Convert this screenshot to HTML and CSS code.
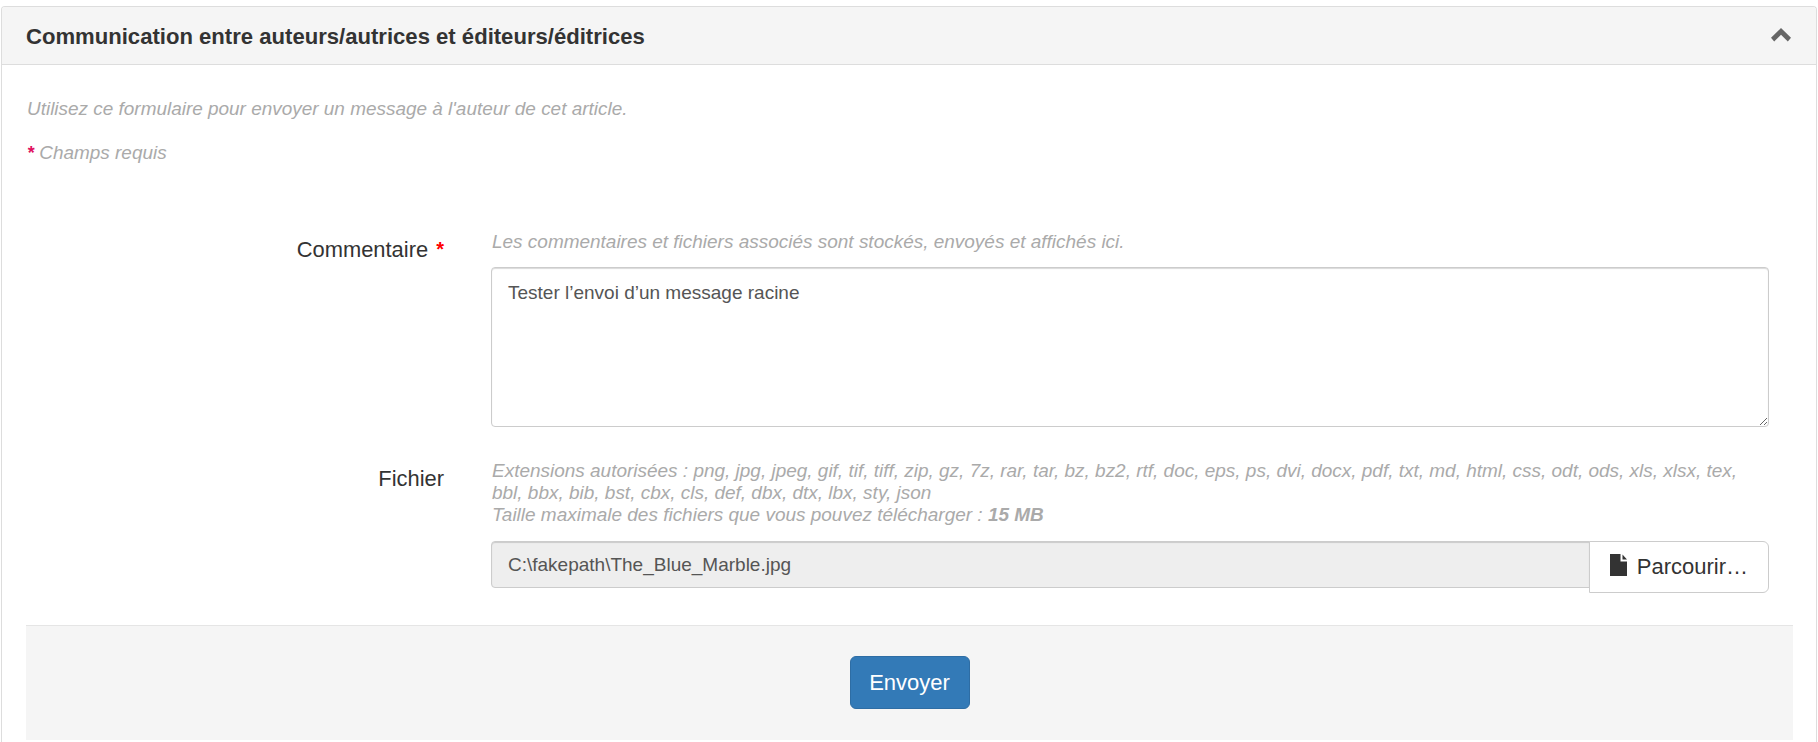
FILE: index.html
```html
<!DOCTYPE html>
<html>
<head>
<meta charset="UTF-8">
<link rel="stylesheet" href="styles.css">
</head>
<body>
<div class="panel">
  <div class="panel-heading">
    <h3 class="panel-title">Communication entre auteurs/autrices et éditeurs/éditrices</h3>
    <svg class="chevron" viewBox="0 0 20 14"><path d="M10 0L20 9.8 16.8 13.4 10 6.8 3.2 13.4 0 9.8z"/></svg>
  </div>
  <div class="panel-body">
    <p class="help intro">Utilisez ce formulaire pour envoyer un message à l'auteur de cet article.</p>
    <p class="help required-note"><b class="star-dark">*</b> Champs requis</p>
    <form class="message-form">
      <div class="form-row comment-row">
        <label class="row-label">Commentaire <span class="star">*</span></label>
        <div class="row-field">
          <p class="help field-help">Les commentaires et fichiers associés sont stockés, envoyés et affichés ici.</p>
          <textarea class="text-input">Tester l’envoi d’un message racine</textarea>
        </div>
      </div>
      <div class="form-row file-row">
        <label class="row-label">Fichier</label>
        <div class="row-field">
          <p class="help field-help">Extensions autorisées : png, jpg, jpeg, gif, tif, tiff, zip, gz, 7z, rar, tar, bz, bz2, rtf, doc, eps, ps, dvi, docx, pdf, txt, md, html, css, odt, ods, xls, xlsx, tex, bbl, bbx, bib, bst, cbx, cls, def, dbx, dtx, lbx, sty, json<br>Taille maximale des fichiers que vous pouvez télécharger : <b>15 MB</b></p>
          <div class="file-group">
            <div class="file-path">C:\fakepath\The_Blue_Marble.jpg</div>
            <button type="button" class="browse">
              <svg class="file-icon" viewBox="0 0 17 22"><path d="M0 0H10.5V7.5H17V22H0zM12.5 0.5L17 5.5H12.5z"/></svg>
              Parcourir…
            </button>
          </div>
        </div>
      </div>
      <div class="form-footer">
        <button type="button" class="send">Envoyer</button>
      </div>
    </form>
  </div>
</div>
</body>
</html>
```

FILE: styles.css
```css
html,body{height:100%}
body{margin:0;padding:6px 1px 0;box-sizing:border-box;font-family:"Liberation Sans",sans-serif;font-size:19px;line-height:22px;color:#333;background:#fff;overflow:hidden}
.panel{height:100%;box-sizing:border-box;border:1px solid #ddd;border-bottom:0;border-radius:4px 4px 0 0;display:flex;flex-direction:column}
.panel-heading{display:flex;align-items:center;justify-content:space-between;box-sizing:border-box;height:58px;padding:2px 25px 0 24px;background:#f5f5f5;border-bottom:1px solid #ddd;border-radius:3px 3px 0 0;flex:none}
.panel-title{margin:0;font-size:22.1px;font-weight:bold;line-height:24px}
.chevron{width:20px;height:14px;fill:#666;margin-bottom:3px}
.panel-body{padding:0 23px 0 24px;flex:1}
.help{margin:0;color:#aaa;font-style:italic;font-size:18.95px;line-height:22px}
.intro{padding-top:33px;padding-left:1px}
.required-note{margin-top:22px;padding-left:1px}
.star-dark{color:#e0115f;font-size:18px;line-height:1}
.form-row{display:grid;grid-template-columns:418px 1fr;column-gap:47px;padding-right:24px}
.comment-row{margin-top:67px}
.file-row{margin-top:33px}
.field-help{padding:0 10px 0 1px;font-size:18.98px}
.row-label{text-align:right;font-size:21.9px;padding-top:7px;line-height:24px;color:#333}
.star{color:#f00;font-size:20px;font-weight:bold;margin-left:2px;line-height:1;vertical-align:1px}
.text-input{display:block;box-sizing:border-box;width:100%;height:160px;margin-top:14px;padding:12px 16px 8px;border:1px solid #ccc;border-radius:4px;box-shadow:inset 0 1px 1px rgba(0,0,0,.15);font-family:"Liberation Sans",sans-serif;font-size:19px;line-height:26px;color:#555;outline:none;resize:vertical}
.file-group{display:flex;align-items:flex-start;margin-top:15px}
.file-path{flex:1;height:47px;box-sizing:border-box;padding:0 16px;background:#eee;border:1px solid #ccc;border-radius:4px 0 0 4px;box-shadow:inset 0 1px 1px rgba(0,0,0,.15);font-size:19px;line-height:45px;color:#555}
.browse{display:flex;align-items:center;gap:10px;height:52px;box-sizing:border-box;margin-left:-1px;padding:0 20px;background:#fff;border:1px solid #ccc;border-radius:0 6px 6px 0;font-family:"Liberation Sans",sans-serif;font-size:22px;color:#333}
.file-icon{width:17px;height:22px;fill:#333;margin-top:-4px}
.form-footer{display:flex;justify-content:center;margin-top:32px;padding:30px 0 31px;background:#f5f5f5;border-top:1px solid #e5e5e5}
.send{width:120px;height:53px;padding:0;background:#337ab7;border:1px solid #2e6da4;border-radius:6px;font-family:"Liberation Sans",sans-serif;font-size:22px;color:#fff}
```
